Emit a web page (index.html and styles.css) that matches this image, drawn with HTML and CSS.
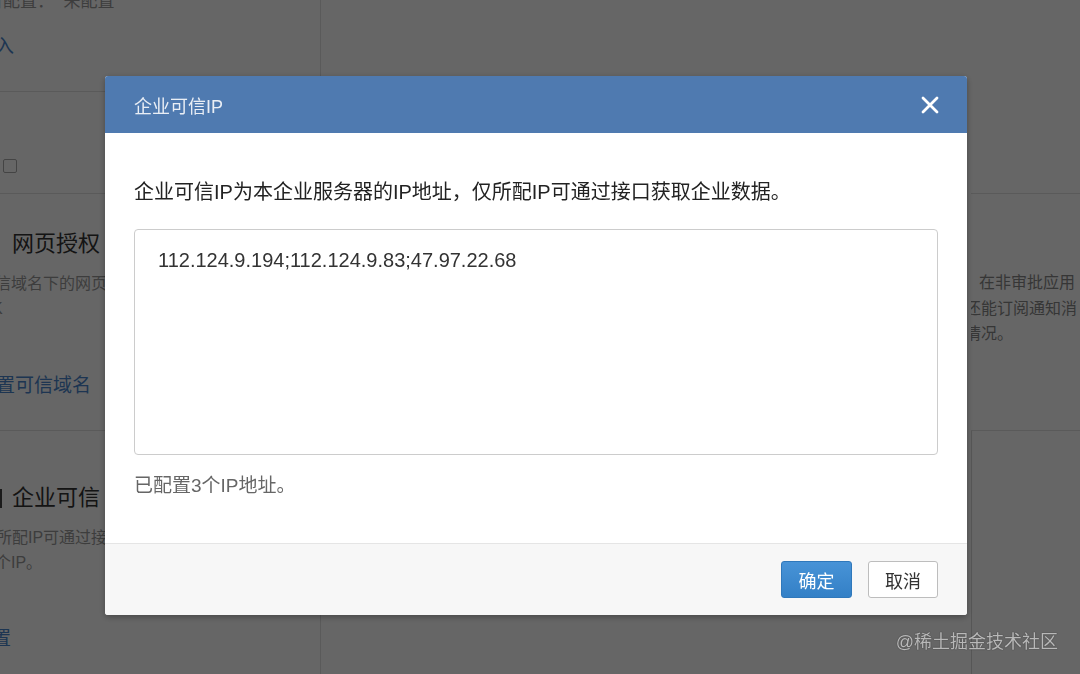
FILE: index.html
```html
<!DOCTYPE html>
<html lang="zh-CN">
<head>
  <meta charset="UTF-8" />
  <title>企业可信IP</title>
  <link rel="stylesheet" href="styles.css">
</head>
<body>
  <div class="page">
    <div class="col col-left">
      <div class="card card-top">
        <p class="meta shift-14">可配置：&nbsp;&nbsp;未配置</p>
        <a class="link shift-24">接入</a>
      </div>
      <div class="card card-check">
        <span class="check"></span>
      </div>
      <div class="card card-web">
        <h3 class="card-title">网页授权</h3>
        <p class="desc shift-5">信域名下的网页授权<br><span class="shift-3">K</span></p>
        <a class="link shift-4">置可信域名</a>
      </div>
      <div class="card card-ip">
        <h3 class="card-title"><span class="bar"></span>企业可信</h3>
        <p class="desc shift-4">所配IP可通过接口获取<br><span class="shift-1">个IP。</span></p>
        <a class="link shift-8">置</a>
      </div>
    </div>
    <div class="col col-mid"></div>
    <div class="col col-right">
      <div class="card card-rtop"></div>
      <div class="card card-notify">
        <p class="desc right-desc"><span class="indent"></span>在非审批应用<br>还能订阅通知消<br>情况。</p>
      </div>
      <div class="card card-rbottom"></div>
    </div>
  </div>

  <div class="mask">
    <div class="dialog">
      <div class="dialog-head">
        <span class="dialog-title">企业可信IP</span>
        <svg class="close" width="18" height="18" viewBox="0 0 18 18">
          <path d="M2 2 L16 16 M16 2 L2 16" stroke="#fff" stroke-width="2.8" stroke-linecap="round" fill="none"/>
        </svg>
      </div>
      <div class="dialog-body">
        <p class="intro">企业可信IP为本企业服务器的IP地址，仅所配IP可通过接口获取企业数据。</p>
        <textarea class="ip-box" readonly>112.124.9.194;112.124.9.83;47.97.22.68</textarea>
        <p class="hint">已配置3个IP地址。</p>
      </div>
      <div class="dialog-foot">
        <button class="btn btn-primary">确定</button>
        <button class="btn btn-default">取消</button>
      </div>
    </div>
  </div>

  <div class="watermark">@稀土掘金技术社区</div>
</body>
</html>
```

FILE: styles.css
```css
body {
  margin: 0;
  width: 1080px;
  height: 674px;
  overflow: hidden;
  background: #fff;
  font-family: "Liberation Sans", "Noto Sans CJK SC", sans-serif;
  color: #333;
}
p, h3 { margin: 0; }

/* page behind the dialog */
.page {
  display: grid;
  grid-template-columns: 321px 650px 1fr;
  height: 674px;
}
.col { box-sizing: border-box; overflow: hidden; }
.col-left { border-right: 1px solid #e0e0e0; }
.card {
  display: flow-root;
  border-bottom: 1px solid #e0e0e0;
  box-sizing: border-box;
}
.card-top { height: 92px; }
.card-check { height: 102px; padding: 67px 0 0 3px; }
.card-web { height: 237px; padding-top: 35px; }
.card-ip { border-bottom: 0; padding-top: 52px; }
.card-rtop { height: 194px; }
.card-notify { height: 237px; padding-top: 76px; }
.card-rbottom { height: 300px; border-bottom: 0; border-left: 1px solid #d8d8d8; }

.meta { font-size: 17px; line-height: 24px; color: #999; margin-top: -10px; }
.link { display: block; font-size: 19px; line-height: 26px; color: #4a86cc; }
.card-top .link { margin-top: 20px; }
.card-web .link { margin-top: 52px; }
.card-ip .link { margin-top: 51px; }
.check {
  display: block;
  width: 12px;
  height: 12px;
  border: 1px solid #aaa;
  border-radius: 2px;
}
.card-title {
  font-size: 22px;
  line-height: 30px;
  font-weight: normal;
  color: #333;
  padding-left: 12px;
  position: relative;
}
.bar {
  position: absolute;
  left: 0;
  top: 6px;
  width: 2px;
  height: 19px;
  background: #444;
}
.desc { font-size: 16px; line-height: 25px; color: #999; margin-top: 12px; }
.right-desc { margin: 0 0 0 -6px; line-height: 25.5px; color: #888; }
.indent { display: inline-block; width: 14px; }
.shift-1 { margin-left: -1px; }
.shift-3 { margin-left: -3px; }
.shift-4 { margin-left: -4px; }
.shift-5 { margin-left: -5px; }
.shift-8 { margin-left: -8px; }
.shift-14 { margin-left: -14px; }
.shift-24 { margin-left: -24px; }
.desc span { display: inline-block; }

/* dialog */
.mask {
  position: fixed;
  inset: 0;
  background: rgba(0, 0, 0, 0.6);
}
.dialog {
  position: absolute;
  left: 105px;
  top: 76px;
  width: 862px;
  background: #fff;
  border-radius: 3px;
  overflow: hidden;
  box-shadow: 0 2px 6px rgba(0, 0, 0, 0.3);
}
.dialog-head {
  height: 57px;
  background: #4f7ab0;
  display: flex;
  align-items: center;
  justify-content: space-between;
  padding: 0 28px 0 29px;
}
.dialog-title { color: #e9eef5; font-size: 18px; }
.dialog-body { padding: 45px 29px 43px; }
.intro { font-size: 20px; line-height: 28px; color: #222; margin-bottom: 23px; }
.ip-box {
  display: block;
  width: 804px;
  height: 226px;
  box-sizing: border-box;
  border: 1px solid #ccc;
  border-radius: 4px;
  padding: 16px 23px;
  font-family: inherit;
  font-size: 20px;
  line-height: 28px;
  color: #333;
  resize: none;
  outline: none;
}
.hint { margin-top: 17px; font-size: 19px; line-height: 28px; color: #666; }
.dialog-foot {
  height: 71px;
  border-top: 1px solid #e5e5e5;
  background: #f7f7f7;
  display: flex;
  justify-content: flex-end;
  align-items: center;
  gap: 16px;
  padding-right: 29px;
}
.btn {
  width: 71px;
  height: 37px;
  border-radius: 3px;
  font-family: inherit;
  font-size: 18px;
  padding: 0;
}
.btn-primary {
  background: linear-gradient(#4893d7, #3380c6);
  border: 1px solid #2f78bb;
  color: #fff;
}
.btn-default {
  width: 70px;
  background: #fff;
  border: 1px solid #bdbdbd;
  color: #333;
}

.watermark {
  position: absolute;
  right: 22px;
  top: 629px;
  font-size: 18px;
  line-height: 26px;
  color: #b8b8b8;
  text-shadow: 0 0 1px #444, 0 0 1px #444;
}
```
